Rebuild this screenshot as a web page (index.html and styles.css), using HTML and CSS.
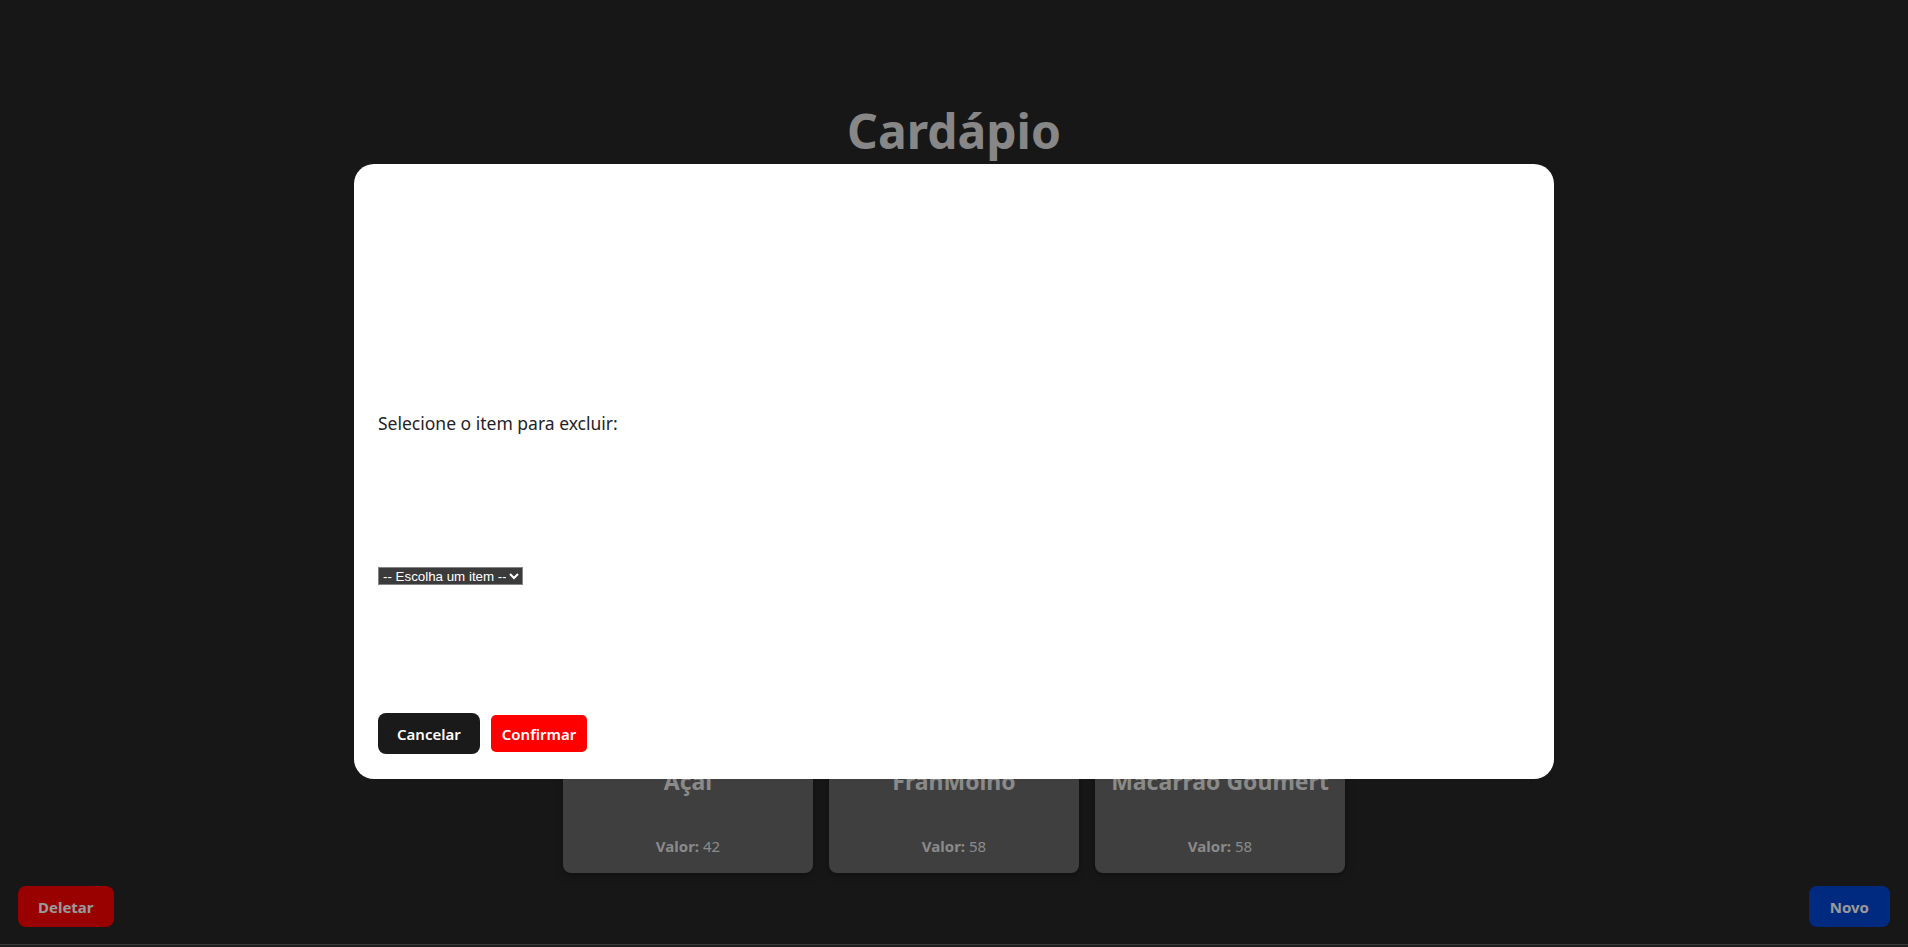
FILE: index.html
```html
<!DOCTYPE html>
<html lang="pt-BR">
<head>
<meta charset="utf-8">
<title>Cardápio</title>
<link rel="stylesheet" href="styles.css">
</head>
<body>
<div class="page">
  <header class="page-header">
    <h1 class="page-title">Cardápio</h1>
  </header>
  <main class="menu">
    <div class="cards">
      <article class="card">
        <h2 class="card-title">Açaí</h2>
        <p class="card-price"><strong>Valor:</strong> 42</p>
      </article>
      <article class="card">
        <h2 class="card-title">FranMolho</h2>
        <p class="card-price"><strong>Valor:</strong> 58</p>
      </article>
      <article class="card">
        <h2 class="card-title">Macarrão Goumert</h2>
        <p class="card-price"><strong>Valor:</strong> 58</p>
      </article>
    </div>
  </main>
  <div class="actions-bar">
    <button class="btn btn-delete" type="button">Deletar</button>
    <button class="btn btn-new" type="button">Novo</button>
  </div>
  <footer class="page-footer"></footer>
</div>

<div class="overlay">
  <form class="modal">
    <label class="modal-label" for="item-select">Selecione o item para excluir:</label>
    <select class="modal-select" id="item-select">
      <option>-- Escolha um item --</option>
      <option>Açaí</option>
      <option>FranMolho</option>
      <option>Macarrão Goumert</option>
    </select>
    <div class="modal-actions">
      <button class="modal-btn modal-cancel" type="button">Cancelar</button>
      <button class="modal-btn modal-confirm" type="button">Confirmar</button>
    </div>
  </form>
</div>
</body>
</html>
```
FILE: styles.css
```css
* {
  box-sizing: border-box;
}

html, body {
  margin: 0;
  padding: 0;
  height: 100%;
}

body {
  background: #242424;
  color: rgba(255, 255, 255, 0.87);
  font-family: "Noto Sans", "Open Sans", sans-serif;
  overflow: hidden;
}

.page {
  display: flex;
  flex-direction: column;
  height: 100vh;
}

.page-header {
  display: flex;
  justify-content: center;
}

.page-title {
  margin: 98px 0 0;
  font-size: 48px;
  font-weight: 700;
  line-height: normal;
  color: #d0d0d0;
}

.menu {
  flex: 1;
  display: flex;
  align-items: flex-end;
  justify-content: center;
}

.cards {
  display: flex;
  align-items: flex-end;
  gap: 16px;
}

.card {
  width: 250px;
  padding: 16px 10px 17px;
  background: #616161;
  border-radius: 8px;
  box-shadow: 0 2px 8px rgba(0, 0, 0, 0.35);
  text-align: center;
  color: #d4d4d4;
}

.card-title {
  margin: 0 0 38px;
  font-size: 23px;
  font-weight: 700;
  line-height: 33px;
  white-space: nowrap;
}

.card-price {
  margin: 0;
  font-size: 15px;
  line-height: normal;
}

.actions-bar {
  display: flex;
  justify-content: space-between;
  padding: 13px 18px 17px;
}

.btn {
  height: 41px;
  padding: 0 20px;
  border: none;
  border-radius: 8px;
  font-family: "Noto Sans", "Open Sans", sans-serif;
  font-size: 15px;
  font-weight: 700;
  color: #ebebeb;
}

.btn-delete {
  background: #eb0000;
}

.btn-new {
  background: #0041c5;
  padding: 0 21px;
}

.page-footer {
  height: 3px;
  border-top: 1px solid #595959;
  background: #2e2e2e;
}

.overlay {
  position: fixed;
  inset: 0;
  background: rgba(0, 0, 0, 0.35);
  display: flex;
  align-items: center;
  justify-content: center;
  padding-bottom: 4px;
}

.modal {
  width: 1200px;
  height: 615px;
  background: #ffffff;
  border-radius: 20px;
  padding: 24px 24px 25px;
  display: flex;
  flex-direction: column;
  justify-content: flex-end;
}

.modal-label {
  font-size: 17.5px;
  line-height: normal;
  color: #1f2328;
  margin-bottom: 132px;
}

.modal-select {
  align-self: flex-start;
  color-scheme: dark;
  width: 145px;
  height: 18px;
  padding: 0;
  margin: 0 0 128px;
  font-family: "Liberation Sans", Arial, sans-serif;
  font-size: 13.33px;
  color: #ffffff;
  background-color: #3b3b3b;
  border: 1px solid #858585;
  border-radius: 0;
}

.modal-actions {
  display: flex;
  align-items: center;
  gap: 11px;
}

.modal-btn {
  border: none;
  font-family: "Noto Sans", "Open Sans", sans-serif;
  font-size: 15px;
  font-weight: 600;
  color: #ffffff;
}

.modal-cancel {
  height: 41px;
  padding: 0 19px;
  background: #1a1a1a;
  border-radius: 8px;
}

.modal-confirm {
  height: 37px;
  padding: 0 11px;
  background: #ff0000;
  border-radius: 5px;
}
```
